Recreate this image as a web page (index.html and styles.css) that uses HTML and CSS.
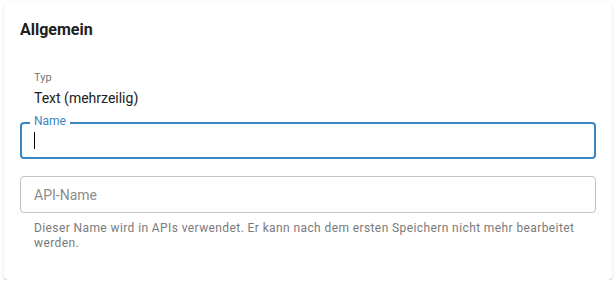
FILE: index.html
```html
<!DOCTYPE html>
<html lang="de">
<head>
<meta charset="utf-8">
<title>Allgemein</title>
<link rel="stylesheet" href="styles.css">
</head>
<body>
<div class="page">
  <section class="card">
    <h2 class="title">Allgemein</h2>
    <div class="readonly">
      <div class="ro-label">Typ</div>
      <div class="ro-value">Text (mehrzeilig)</div>
    </div>
    <div class="field field-focused">
      <span class="field-label">Name</span>
      <span class="caret"></span>
    </div>
    <div class="field field-idle">
      <span class="placeholder">API-Name</span>
    </div>
    <p class="helper">Dieser Name wird in APIs verwendet. Er kann nach dem ersten Speichern nicht mehr bearbeitet werden.</p>
  </section>
</div>
</body>
</html>
```
FILE: styles.css
```css
html, body {
  margin: 0;
  padding: 0;
  background: #ffffff;
}
body {
  font-family: Roboto, "Liberation Sans", Arial, sans-serif;
  color: rgba(0, 0, 0, 0.87);
}
.page {
  padding: 2px 4px 0 4px;
}
.card {
  box-sizing: border-box;
  width: 608px;
  height: 278px;
  background: #fff;
  border-radius: 4px;
  box-shadow: 0 2px 1px -1px rgba(0,0,0,0.2), 0 1px 1px 0 rgba(0,0,0,0.14), 0 1px 3px 0 rgba(0,0,0,0.12);
  padding: 16px 16px 0 16px;
}
.title {
  margin: 0;
  font-size: 16px;
  line-height: 24px;
  font-weight: 700;
  color: #212121;
}
.readonly {
  margin-top: 27px;
  padding-left: 14px;
}
.ro-label {
  font-size: 11px;
  line-height: 17px;
  color: #757575;
}
.ro-value {
  font-size: 14px;
  line-height: 24px;
  color: #212121;
}
.field {
  position: relative;
  box-sizing: border-box;
  height: 37px;
  border-radius: 4px;
  display: flex;
  align-items: center;
}
.field-focused {
  margin-top: 12px;
  border: 2px solid #3a86c2;
  padding-left: 12px;
}
.field-idle {
  margin-top: 17px;
  border: 1px solid #c4c4c4;
  padding-left: 13px;
}
.field-label {
  position: absolute;
  left: 8px;
  top: -10px;
  padding: 0 4px;
  background: #fff;
  font-size: 12px;
  line-height: 14px;
  color: #3a86c2;
}
.caret {
  width: 1px;
  height: 17px;
  background: #000;
}
.placeholder {
  font-size: 14px;
  color: #8c8c8c;
}
.helper {
  margin: 8px 14px 0 14px;
  font-size: 12px;
  line-height: 15px;
  letter-spacing: 0.4px;
  color: #7a7a7a;
}
```
